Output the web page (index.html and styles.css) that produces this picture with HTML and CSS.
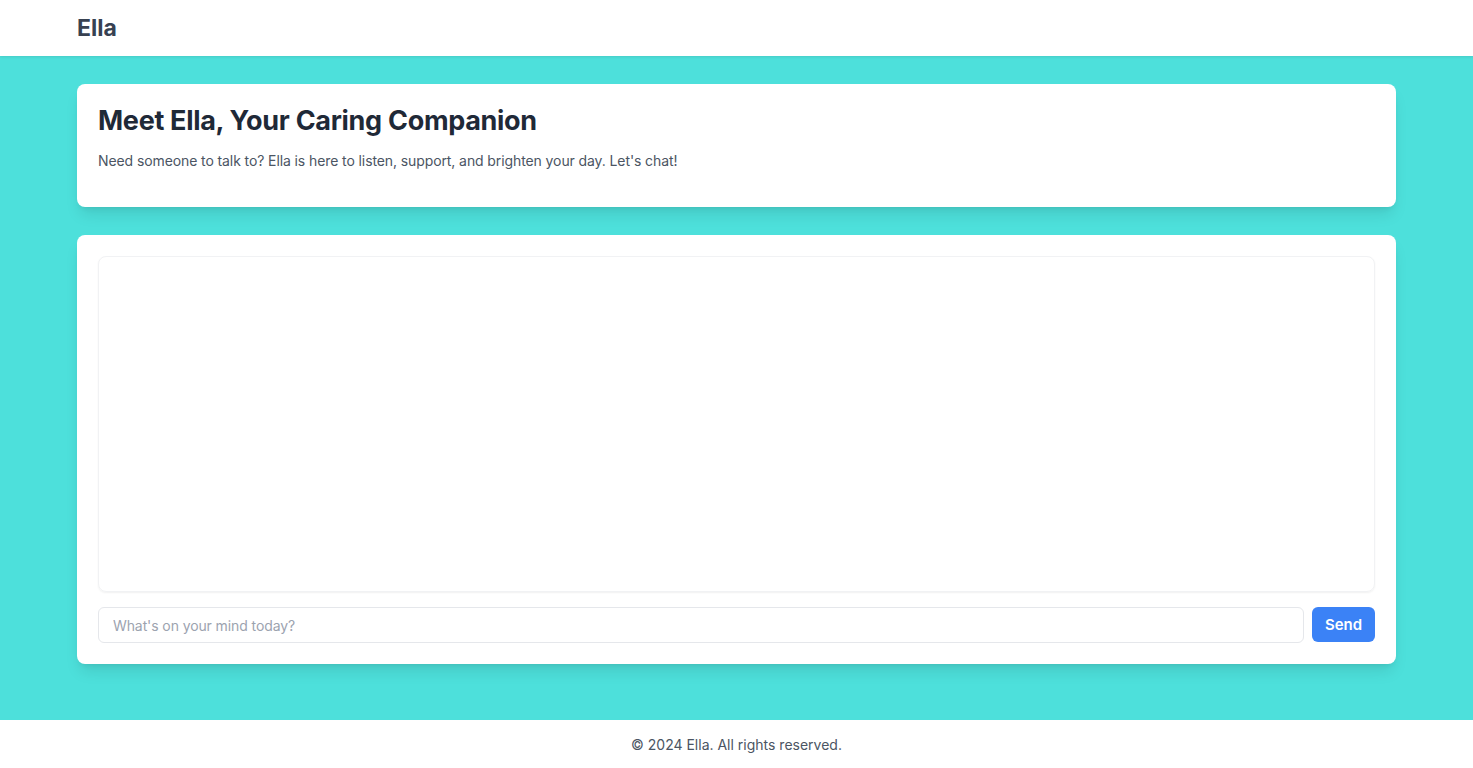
FILE: index.html
```html
<!DOCTYPE html>
<html lang="en">
<head>
  <meta charset="UTF-8" />
  <meta name="viewport" content="width=device-width, initial-scale=1.0"/>
  <title>Ella</title>
  <link rel="stylesheet" href="styles.css">
</head>
<body>

  <!-- Header -->
  <header class="topbar">
    <div class="wrap">
      <span class="logo">Ella</span>
    </div>
  </header>

  <!-- Main -->
  <main class="wrap page">
    <section class="card intro">
      <h1>Meet Ella, Your Caring Companion</h1>
      <p>Need someone to talk to? Ella is here to listen, support, and brighten your day. Let's chat!</p>
    </section>

    <section class="card chat">
      <div class="chat-log" id="chatLog"></div>
      <div class="chat-form">
        <input type="text" id="msgInput" placeholder="What's on your mind today?" />
        <button>Send</button>
      </div>
    </section>
  </main>

  <!-- Footer -->
  <footer class="foot">
    <p>&copy; 2024 Ella. All rights reserved.</p>
  </footer>

</body>
</html>
```

FILE: styles.css
```css
:root {
  --teal: #4de0db;
  --blue: #3b82f6;
  --text-dark: #1f2937;
  --text: #4b5563;
  --border: #e5e7eb;
}

* {
  box-sizing: border-box;
}

body {
  margin: 0;
  font-family: 'Inter', sans-serif;
  background-color: var(--teal);
  color: var(--text-dark);
}

.wrap {
  width: calc(100% - 154px);
  margin: 0 auto;
}

.topbar {
  height: 56px;
  background: white;
  display: flex;
  align-items: center;
  box-shadow: 0 1px 3px rgba(0,0,0,0.1);
}

.logo {
  font-size: 23px;
  font-weight: 700;
  color: #374151;
}

.page {
  padding: 28px 0 56px;
  display: flex;
  flex-direction: column;
  gap: 28px;
}

.card {
  background: white;
  border-radius: 8px;
  padding: 21px;
  box-shadow: 0 10px 15px -3px rgba(0,0,0,0.1), 0 4px 6px -4px rgba(0,0,0,0.1);
}

.intro {
  padding-bottom: 35px;
}

.intro h1 {
  margin: 0 0 13px;
  font-size: 27px;
  line-height: 32px;
  font-weight: 700;
  letter-spacing: -0.3px;
}

.intro p {
  margin: 0;
  font-size: 14px;
  line-height: 22px;
  letter-spacing: -0.1px;
  color: var(--text);
}

.chat-log {
  height: 336px;
  border: 1px solid #f1f2f4;
  border-radius: 8px;
  box-shadow: 0 1px 2px rgba(0,0,0,0.06);
  margin-bottom: 15px;
}

.chat-form {
  display: flex;
  gap: 8px;
}

.chat-form input {
  flex: 1;
  height: 36px;
  padding: 0 14px;
  font-family: 'Inter', sans-serif;
  font-size: 14px;
  letter-spacing: -0.1px;
  border: 1px solid var(--border);
  border-radius: 6px;
  outline: none;
}

.chat-form input::placeholder {
  color: #9ca3af;
}

.chat-form button {
  width: 63px;
  height: 35px;
  background: var(--blue);
  color: white;
  border: none;
  border-radius: 6px;
  font-family: 'Inter', sans-serif;
  font-size: 15px;
  font-weight: 600;
}

.foot {
  background: white;
  height: 48px;
  display: flex;
  align-items: center;
  justify-content: center;
}

.foot p {
  margin: 0;
  font-size: 14px;
  color: var(--text);
}
```
